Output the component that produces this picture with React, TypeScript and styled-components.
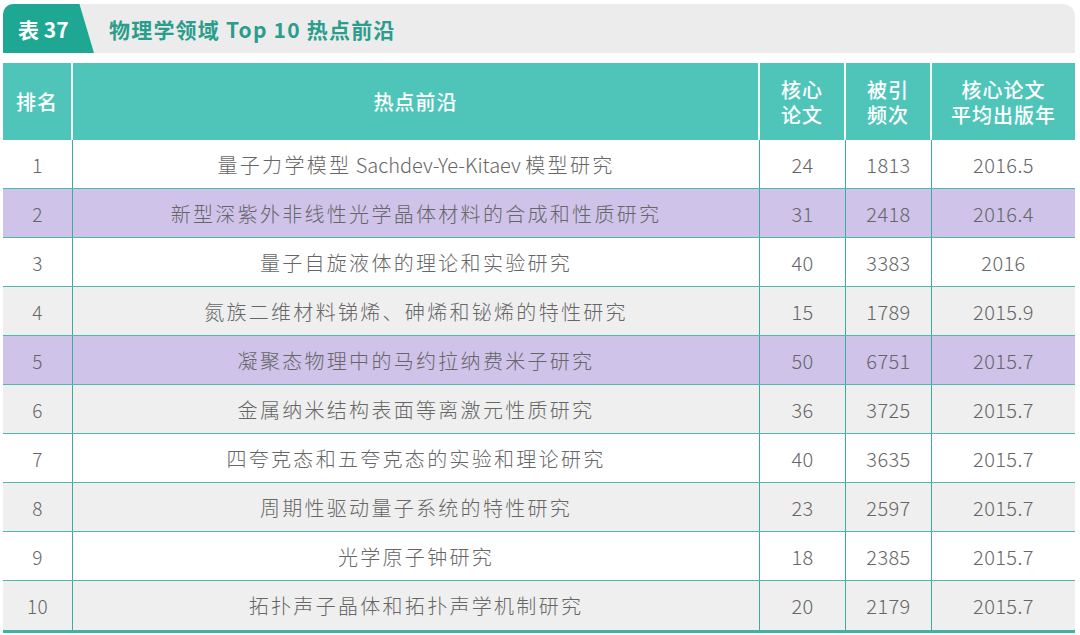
import styled, { createGlobalStyle } from "styled-components";

const GlobalStyle = createGlobalStyle`
  html, body {
    margin: 0;
    padding: 0;
    background: #ffffff;
  }
  body {
    font-family: "Noto Sans CJK SC", "Noto Sans", sans-serif;
  }
`;

const COLS = "70px 687px 86px 86px 1fr";

const Page = styled.div`
  width: 1072px;
  padding: 4px 5px 0 3px;
`;

const TitleBar = styled.div`
  display: flex;
  align-items: center;
  height: 49px;
  background: #ececec;
  border-radius: 10px 12px 0 0;
`;

const Tab = styled.div`
  width: 91px;
  height: 100%;
  display: flex;
  align-items: center;
  padding-left: 15px;
  box-sizing: border-box;
  background: #1ea893;
  color: #ffffff;
  font-size: 21px;
  font-weight: 700;
  border-top-left-radius: 10px;
  clip-path: polygon(0 0, 84% 0, 100% 100%, 0 100%);
`;

const Title = styled.div`
  margin-left: 15px;
  color: #2a9d8c;
  font-size: 21px;
  font-weight: 700;
  letter-spacing: 1.2px;
`;

const Table = styled.div`
  margin-top: 10px;
  border-bottom: 3px solid #3db3a6;
`;

const HeadRow = styled.div`
  display: grid;
  grid-template-columns: ${COLS};
  height: 77px;
  background: #4fc5b9;
`;

const HeadCell = styled.div<{ $last?: boolean }>`
  display: flex;
  flex-direction: column;
  align-items: center;
  justify-content: center;
  text-align: center;
  color: #ffffff;
  font-size: 20px;
  font-weight: 500;
  letter-spacing: 1px;
  border-right: ${(p) => (p.$last ? "none" : "2px solid #f2fbfa")};
`;

const HeadLine = styled.span`
  display: block;
  line-height: 25px;
`;

const Row = styled.div<{ $tone: Tone }>`
  display: grid;
  grid-template-columns: ${COLS};
  height: 49px;
  box-sizing: border-box;
  border-bottom: 1px solid #4db8ad;
  background: ${(p) =>
    p.$tone === "purple" ? "#cfc3ea" : p.$tone === "grey" ? "#efefef" : "#ffffff"};
  &:last-child {
    border-bottom: none;
  }
`;

const Cell = styled.div<{ $last?: boolean; $kind?: "rank" | "topic" | "num" }>`
  display: flex;
  align-items: center;
  justify-content: center;
  color: #666666;
  font-size: ${(p) => (p.$kind === "rank" ? "19px" : "20px")};
  font-weight: 300;
  letter-spacing: ${(p) => (p.$kind === "topic" ? "2.3px" : "0.4px")};
  border-right: ${(p) => (p.$last ? "none" : "1px solid #3fa99d")};
  white-space: pre;
`;

const Latin = styled.span`
  letter-spacing: 0;
`;

type Tone = "white" | "grey" | "purple";

const rows: { topic: string; core: number; cites: number; year: string; tone: Tone }[] = [
  { topic: "量子力学模型 Sachdev-Ye-Kitaev 模型研究", core: 24, cites: 1813, year: "2016.5", tone: "white" },
  { topic: "新型深紫外非线性光学晶体材料的合成和性质研究", core: 31, cites: 2418, year: "2016.4", tone: "purple" },
  { topic: "量子自旋液体的理论和实验研究", core: 40, cites: 3383, year: "2016", tone: "white" },
  { topic: "氮族二维材料锑烯、砷烯和铋烯的特性研究", core: 15, cites: 1789, year: "2015.9", tone: "grey" },
  { topic: "凝聚态物理中的马约拉纳费米子研究", core: 50, cites: 6751, year: "2015.7", tone: "purple" },
  { topic: "金属纳米结构表面等离激元性质研究", core: 36, cites: 3725, year: "2015.7", tone: "grey" },
  { topic: "四夸克态和五夸克态的实验和理论研究", core: 40, cites: 3635, year: "2015.7", tone: "white" },
  { topic: "周期性驱动量子系统的特性研究", core: 23, cites: 2597, year: "2015.7", tone: "grey" },
  { topic: "光学原子钟研究", core: 18, cites: 2385, year: "2015.7", tone: "white" },
  { topic: "拓扑声子晶体和拓扑声学机制研究", core: 20, cites: 2179, year: "2015.7", tone: "grey" },
];

// latin runs inside a topic keep their natural spacing
const renderTopic = (topic: string) =>
  topic.split(/( [A-Za-z-]+ )/).map((part, i) =>
    /[A-Za-z]/.test(part) ? <Latin key={i}>{part}</Latin> : part
  );

export default function App() {
  return (
    <Page>
      <GlobalStyle />
      <TitleBar>
        <Tab>表 37</Tab>
        <Title>物理学领域 Top 10 热点前沿</Title>
      </TitleBar>
      <Table>
        <HeadRow>
          <HeadCell>排名</HeadCell>
          <HeadCell>热点前沿</HeadCell>
          <HeadCell>
            <HeadLine>核心</HeadLine>
            <HeadLine>论文</HeadLine>
          </HeadCell>
          <HeadCell>
            <HeadLine>被引</HeadLine>
            <HeadLine>频次</HeadLine>
          </HeadCell>
          <HeadCell $last>
            <HeadLine>核心论文</HeadLine>
            <HeadLine>平均出版年</HeadLine>
          </HeadCell>
        </HeadRow>
        {rows.map((r, i) => (
          <Row key={r.topic} $tone={r.tone}>
            <Cell $kind="rank">{i + 1}</Cell>
            <Cell $kind="topic">{renderTopic(r.topic)}</Cell>
            <Cell $kind="num">{r.core}</Cell>
            <Cell $kind="num">{r.cites}</Cell>
            <Cell $kind="num" $last>
              {r.year}
            </Cell>
          </Row>
        ))}
      </Table>
    </Page>
  );
}
